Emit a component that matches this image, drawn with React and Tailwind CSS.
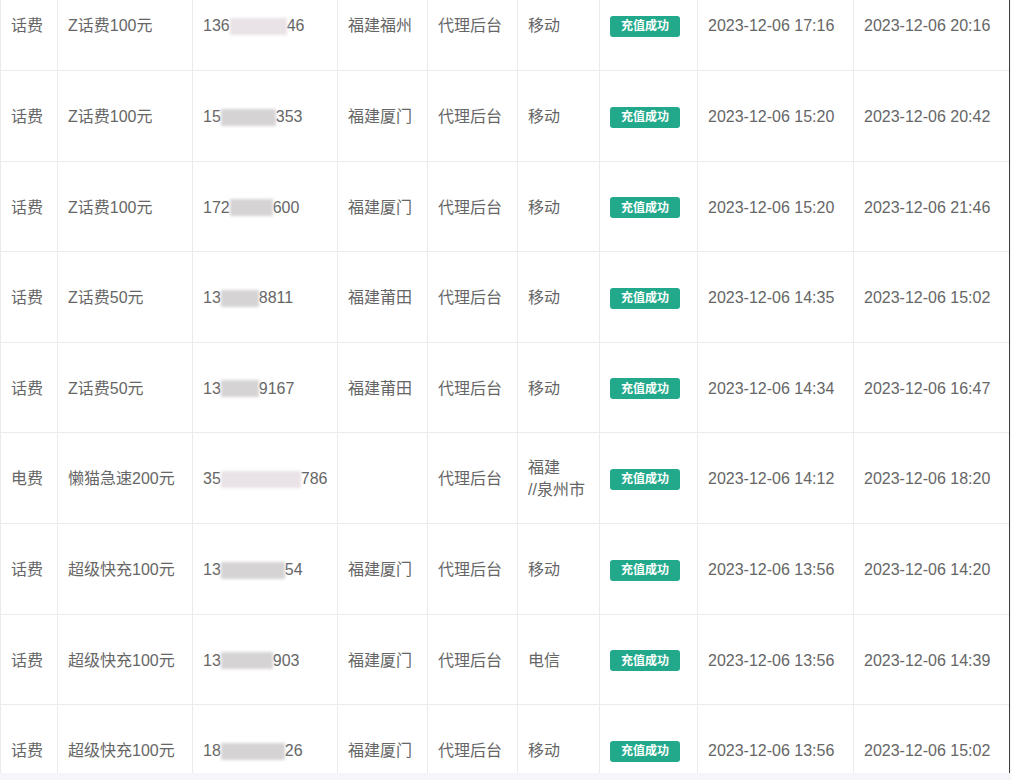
import React from 'react';

const cols = [
  'w-[57px]',
  'w-[135px]',
  'w-[145px]',
  'w-[90px]',
  'w-[90px]',
  'w-[82px]',
  'w-[98px]',
  'w-[156px]',
  'w-[156px]',
];

// phone numbers are masked in the screenshot, so keep head / blur / tail
const rows = [
  { h: 'h-[91px]', type: '话费', name: 'Z话费100元', head: '136', blur: 'w-[57px]', tail: '46', area: '福建福州', isp: '移动', start: '2023-12-06 17:16', end: '2023-12-06 20:16', soft: true },
  { h: 'h-[91px]', type: '话费', name: 'Z话费100元', head: '15', blur: 'w-[55px]', tail: '353', area: '福建厦门', isp: '移动', start: '2023-12-06 15:20', end: '2023-12-06 20:42' },
  { h: 'h-[90px]', type: '话费', name: 'Z话费100元', head: '172', blur: 'w-[43px]', tail: '600', area: '福建厦门', isp: '移动', start: '2023-12-06 15:20', end: '2023-12-06 21:46' },
  { h: 'h-[91px]', type: '话费', name: 'Z话费50元', head: '13', blur: 'w-[38px]', tail: '8811', area: '福建莆田', isp: '移动', start: '2023-12-06 14:35', end: '2023-12-06 15:02' },
  { h: 'h-[90px]', type: '话费', name: 'Z话费50元', head: '13', blur: 'w-[38px]', tail: '9167', area: '福建莆田', isp: '移动', start: '2023-12-06 14:34', end: '2023-12-06 16:47' },
  { h: 'h-[91px]', type: '电费', name: '懒猫急速200元', head: '35', blur: 'w-[80px]', tail: '786', area: '', isp: ['福建', '//泉州市'], start: '2023-12-06 14:12', end: '2023-12-06 18:20', soft: true },
  { h: 'h-[91px]', type: '话费', name: '超级快充100元', head: '13', blur: 'w-[64px]', tail: '54', area: '福建厦门', isp: '移动', start: '2023-12-06 13:56', end: '2023-12-06 14:20' },
  { h: 'h-[90px]', type: '话费', name: '超级快充100元', head: '13', blur: 'w-[52px]', tail: '903', area: '福建厦门', isp: '电信', start: '2023-12-06 13:56', end: '2023-12-06 14:39' },
  { h: 'h-[91px]', type: '话费', name: '超级快充100元', head: '18', blur: 'w-[64px]', tail: '26', area: '福建厦门', isp: '移动', start: '2023-12-06 13:56', end: '2023-12-06 15:02' },
];

const Cell = ({ w, children }) => (
  <div className={`${w} shrink-0 h-full flex items-center pl-[10px] pr-[6px] pt-[2px] border-r border-[#ebebeb]`}>
    {children}
  </div>
);

const Badge = () => (
  <span className="inline-flex items-center justify-center w-[70px] h-[21px] rounded-[3px] bg-[#22a98b] text-white text-[12px] font-bold leading-none">
    充值成功
  </span>
);

const Phone = ({ row }) => (
  <span className="flex items-center whitespace-nowrap">
    <span>{row.head}</span>
    <span
      className={`${row.blur} h-[17px] inline-block blur-[1.5px] ${
        row.soft ? 'bg-[#e9e2e6]' : 'bg-[#d6d3d5]'
      }`}
    />
    <span>{row.tail}</span>
  </span>
);

export default function App() {
  return (
    <div
      className="w-[1011px] h-[780px] overflow-hidden bg-[#f7f4fa] text-[16px] text-[#666]"
      style={{ fontFamily: '"Liberation Sans", "Noto Sans CJK SC", sans-serif' }}
    >
      <div className="w-[1010px] h-[773px] overflow-hidden bg-white border-r border-[#3c3c3c]">
        <div className="-mt-[20px] flex flex-col">
          {rows.map((r, i) => (
            <div key={i} className={`${r.h} shrink-0 flex border-b border-l border-[#ebebeb]`}>
              <Cell w={cols[0]}>{r.type}</Cell>
              <Cell w={cols[1]}>{r.name}</Cell>
              <Cell w={cols[2]}>
                <Phone row={r} />
              </Cell>
              <Cell w={cols[3]}>{r.area}</Cell>
              <Cell w={cols[4]}>代理后台</Cell>
              <Cell w={cols[5]}>
                {Array.isArray(r.isp) ? (
                  <div className="flex flex-col leading-[22px]">
                    <span>{r.isp[0]}</span>
                    <span>{r.isp[1]}</span>
                  </div>
                ) : (
                  r.isp
                )}
              </Cell>
              <Cell w={cols[6]}>
                <Badge />
              </Cell>
              <Cell w={cols[7]}>{r.start}</Cell>
              <div className={`${cols[8]} shrink-0 h-full flex items-center pl-[10px] pt-[2px]`}>{r.end}</div>
            </div>
          ))}
        </div>
      </div>
    </div>
  );
}
